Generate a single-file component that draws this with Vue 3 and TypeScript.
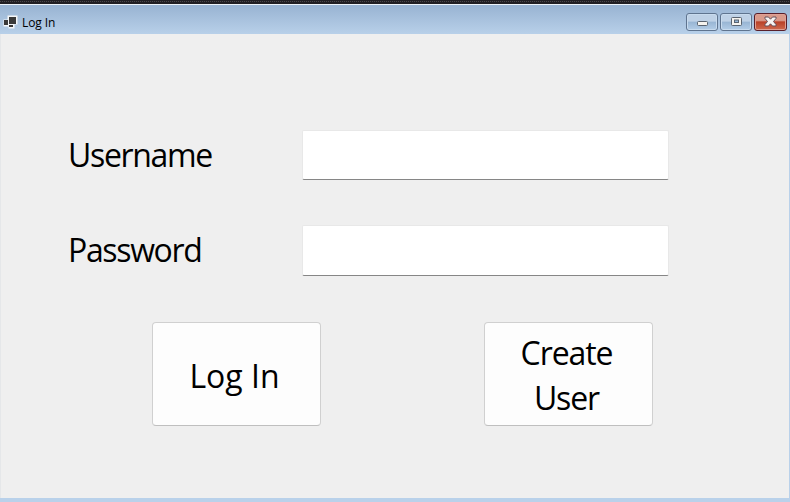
<script setup lang="ts">
import { ref } from 'vue'

const username = ref('')
const password = ref('')
</script>

<template>
  <div class="screen">
    <div class="backdrop"></div>
    <header class="titlebar">
      <svg class="app-icon" width="16" height="16" viewBox="0 0 16 16">
        <path d="M4.500 .5h10v9h-3v4h-6v-2h-5v-7h4z" fill="#f4f6f8" />
        <path d="M6 2h7v7H6zM1 5h4v5H1zM6 10h4v2H6z" fill="#3a3a3a" />
      </svg>
      <h1 class="title">Log In</h1>
      <div class="controls">
        <button class="control" aria-label="Minimize">
          <svg width="31" height="17" viewBox="0 0 31 17">
            <rect x="10.5" y="8.500" width="10" height="4" rx="1" fill="#f5f3ef" stroke="#59636f" />
          </svg>
        </button>
        <button class="control" aria-label="Maximize">
          <svg width="31" height="17" viewBox="0 0 31 17">
            <rect x="10.5" y="4.500" width="10" height="8" rx="1" fill="#f5f3ef" stroke="#59636f" />
            <rect x="13.5" y="7" width="4" height="2.500" fill="#94b4d5" stroke="#59636f" />
          </svg>
        </button>
        <button class="control close" aria-label="Close">
          <svg width="31" height="17" viewBox="0 0 31 17">
            <path d="M10 4h3.500l2 2.200 2-2.200H21v1.500l-2.500 3 2.500 3V13h-3.500l-2-2.200-2 2.200H10v-1.500l2.500-3-2.500-3z" fill="#f7f4f2" stroke="#65505a" stroke-linejoin="round" />
          </svg>
        </button>
      </div>
    </header>
    <main class="client">
      <div class="row">
        <label class="caption" for="username">Username</label>
        <input id="username" v-model="username" class="field" type="text" />
      </div>
      <div class="row second">
        <label class="caption" for="password">Password</label>
        <input id="password" v-model="password" class="field" type="password" />
      </div>
      <div class="actions">
        <button class="action"><span class="login">Log In</span></button>
        <button class="action"><span class="create">Create<br />User</span></button>
      </div>
    </main>
  </div>
</template>

<style>
body {
  margin: 0;
  overflow: hidden;
}
</style>

<style scoped>
.screen {
  box-sizing: border-box;
  width: 790px;
  height: 502px;
  display: flex;
  flex-direction: column;
  background: #b9d1ea;
  font-family: "Open Sans", "Noto Sans", sans-serif;
  color: #000;
}
.backdrop {
  height: 4px;
  flex: none;
  background: repeating-linear-gradient(90deg, #4a484b 0 1px, #242226 1px 2px) 0 1px / 100% 1px no-repeat #211f23;
}
.titlebar {
  box-sizing: border-box;
  height: 30px;
  flex: none;
  display: flex;
  align-items: center;
  padding: 5px 3px 0;
  border-top: 1px solid #edf3f9;
  background: linear-gradient(#98b3d2, #b8d0e9);
}
.app-icon {
  margin-top: 1px;
}
.title {
  margin: 2px 0 0 3px;
  font-size: 12px;
  line-height: 16px;
  font-weight: 400;
  letter-spacing: -0.1px;
}
.controls {
  margin-left: auto;
  display: flex;
  gap: 2px;
  margin-top: -1px;
}
.control {
  box-sizing: border-box;
  width: 32px;
  height: 18px;
  padding: 0;
  border: 1px solid #5f748f;
  border-radius: 3px;
  box-shadow: inset 0 0 0 1px #c8dbee;
  background: linear-gradient(#bed1e6 0 45%, #98b5d3 50%, #b3cde7);
  display: flex;
  align-items: center;
  justify-content: center;
}
.control svg {
  flex: none;
}
.close {
  width: 33px;
  border-color: #581f2a;
  box-shadow: inset 0 0 0 1px #dfa094;
  background: linear-gradient(#d99a8b 0 40%, #b94128 50%, #cf6a4e);
}
.client {
  box-sizing: border-box;
  height: 464px;
  margin-right: 1px;
  padding: 96px 0 0 69px;
  background: #efefef;
  border-left: 1px solid #e5e7e9;
  display: flex;
  flex-direction: column;
}
.row {
  display: flex;
  align-items: center;
  height: 50px;
  margin-bottom: 45px;
}
.second {
  height: 51px;
  margin-bottom: 46px;
}
.second .field {
  height: 51px;
}
.second .caption {
  padding-bottom: 2px;
}
.caption {
  width: 234px;
  flex: none;
  margin-left: -2px;
  font-size: 32px;
  line-height: 44px;
  letter-spacing: -1.35px;
  white-space: nowrap;
}
.field {
  box-sizing: border-box;
  width: 367px;
  height: 50px;
  padding: 0 8px;
  border: 1px solid #e8e8e8;
  border-bottom: 1px solid #868686;
  border-radius: 2px;
  background: #fff;
  outline: none;
  font: inherit;
  font-size: 32px;
}
.actions {
  display: flex;
  gap: 163px;
  padding-left: 82px;
}
.action {
  box-sizing: border-box;
  width: 169px;
  height: 104px;
  padding: 2px 0 0;
  border: 1px solid #d0d0d0;
  border-bottom-color: #bfbfbf;
  border-radius: 4px;
  background: #fdfdfd;
  font: inherit;
  font-size: 32px;
  line-height: 45px;
  color: #000;
  text-align: center;
}
.action span {
  display: block;
}
.login {
  padding-right: 4px;
}
.create {
  letter-spacing: -1.1px;
  padding-right: 4px;
}
</style>
